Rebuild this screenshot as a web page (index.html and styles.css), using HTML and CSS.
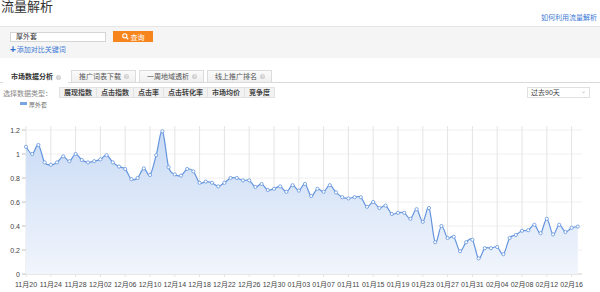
FILE: index.html
```html
<!DOCTYPE html>
<html lang="zh-CN">

<head>
    <meta charset="UTF-8">
    <title>流量解析</title>
    <link rel="stylesheet" href="styles.css">
</head>

<body>
    <div class="header">
        <h1 class="title">流量解析</h1>
        <a class="help-link" href="#">如何利用流量解析</a>
    </div>

    <div class="search-bar">
        <div class="search-row">
            <div class="search-input">厚外套</div>
            <button class="search-btn">
                <svg width="7" height="7" viewBox="0 0 10 10">
                    <circle cx="4" cy="4" r="3" fill="none" stroke="#fff" stroke-width="1.6"/>
                    <line x1="6.2" y1="6.2" x2="9" y2="9" stroke="#fff" stroke-width="1.8"/>
                </svg>
                查询
            </button>
        </div>
        <a class="add-link" href="#"><span class="plus">+</span>添加对比关键词</a>
    </div>

    <div class="tabs">
        <div class="tab active">市场数据分析<span class="help-dot">?</span></div>
        <div class="tab">推广词表下载<span class="help-dot">?</span></div>
        <div class="tab">一周地域透析<span class="help-dot">?</span></div>
        <div class="tab">线上推广排名<span class="help-dot">?</span></div>
    </div>

    <div class="type-row">
        <span class="type-label">选择数据类型：</span>
        <div class="type-btns">
            <span class="type-btn">展现指数</span>
            <span class="type-btn">点击指数</span>
            <span class="type-btn">点击率</span>
            <span class="type-btn">点击转化率</span>
            <span class="type-btn">市场均价</span>
            <span class="type-btn">竞争度</span>
        </div>
        <div class="range-select">过去90天<span class="arrow">⌄</span></div>
    </div>

    <div class="legend"><span class="legend-mark"></span>厚外套</div>

    <svg class="chart" id="chart" width="600" height="184" viewBox="0 108 600 184"></svg>

    <script>
        // 近90天数据
        const data = [1.06, 1.0, 1.075, 0.93, 0.91, 0.93, 0.98, 0.94, 1.0, 0.95, 0.93, 0.94, 0.955, 0.99, 0.93, 0.895, 0.875, 0.79, 0.80, 0.88, 0.825, 0.99, 1.19,
            0.89, 0.83, 0.82, 0.875, 0.855, 0.76, 0.77, 0.76, 0.73, 0.76, 0.80, 0.80, 0.78, 0.78, 0.725, 0.75, 0.70, 0.71, 0.73, 0.685, 0.74, 0.695, 0.75,
            0.65, 0.71, 0.685, 0.74, 0.68, 0.64, 0.63, 0.64, 0.64, 0.56, 0.60, 0.55, 0.57, 0.50, 0.51, 0.51, 0.46, 0.54, 0.435, 0.55, 0.265,
            0.40, 0.30, 0.31, 0.19, 0.265, 0.285, 0.13, 0.215, 0.215, 0.225, 0.165, 0.30, 0.325, 0.36, 0.365, 0.41, 0.34, 0.46, 0.33, 0.41, 0.35, 0.385, 0.395];
        const labels = ['11月20', '11月24', '11月28', '12月02', '12月06', '12月10', '12月14', '12月18', '12月22', '12月26', '12月30', '01月03',
            '01月07', '01月11', '01月15', '01月19', '01月23', '01月27', '01月31', '02月04', '02月08', '02月12', '02月16'];

        const svg = document.getElementById('chart');
        const left = 26, right = 582, zeroY = 274, unit = 120, step = 6.2;
        const px = i => left + i * step;
        const py = v => zeroY - v * unit;
        let html = '<defs><linearGradient id="fill" gradientUnits="userSpaceOnUse" x1="0" y1="130" x2="0" y2="274">' +
            '<stop offset="0" stop-color="#c9dbf5"/><stop offset="1" stop-color="#f1f5fc"/></linearGradient></defs>';

        // 网格与坐标
        for (let k = 0; k <= 6; k++) {
            const v = k * 0.2;
            const y = py(v);
            html += `<line x1="${left}" y1="${y}" x2="${right}" y2="${y}" stroke="#f0f0f0"/>`;
            html += `<line x1="22" y1="${y}" x2="${left}" y2="${y}" stroke="#c0c0c0"/>`;
            const txt = k === 0 ? '0' : (k === 5 ? '1' : v.toFixed(1));
            html += `<text x="20" y="${y + 2.5}" text-anchor="end" class="axis">${txt}</text>`;
        }
        labels.forEach((label, n) => {
            const x = px(n * 4);
            html += `<line x1="${x}" y1="126" x2="${x}" y2="${zeroY + 3}" stroke="#e4e4e4"/>`;
            html += `<text x="${x}" y="287" text-anchor="middle" class="axis">${label}</text>`;
        });
        html += `<line x1="${left}" y1="${zeroY}" x2="${right}" y2="${zeroY}" stroke="#d8d8d8"/>`;

        // 平滑曲线
        const pts = data.map((v, i) => [px(i), py(v)]);
        let d = `M${pts[0][0]},${pts[0][1]}`;
        for (let i = 0; i < pts.length - 1; i++) {
            const p0 = pts[i - 1] || pts[i], p1 = pts[i], p2 = pts[i + 1], p3 = pts[i + 2] || p2;
            const c1 = [p1[0] + (p2[0] - p0[0]) / 6, p1[1] + (p2[1] - p0[1]) / 6];
            const c2 = [p2[0] - (p3[0] - p1[0]) / 6, p2[1] - (p3[1] - p1[1]) / 6];
            d += ` C${c1[0].toFixed(1)},${c1[1].toFixed(1)} ${c2[0].toFixed(1)},${c2[1].toFixed(1)} ${p2[0].toFixed(1)},${p2[1].toFixed(1)}`;
        }
        const last = pts[pts.length - 1];
        html += `<path d="${d} L${last[0]},${zeroY} L${left},${zeroY} Z" fill="url(#fill)"/>`;
        html += `<path d="${d}" fill="none" stroke="#6394dd" stroke-width="1.2"/>`;
        pts.forEach(p => {
            html += `<circle cx="${p[0].toFixed(1)}" cy="${p[1].toFixed(1)}" r="1.6" fill="#fff" stroke="#6394dd" stroke-width="0.8"/>`;
        });
        svg.innerHTML = html;
    </script>
</body>

</html>
```

FILE: styles.css
```css
* {
    margin: 0;
    padding: 0;
    box-sizing: border-box;
}

body {
    font-family: 'Liberation Sans', 'Noto Sans CJK SC', sans-serif;
    font-size: 7px;
    color: #333;
    background-color: #fff;
    width: 600px;
    height: 292px;
    overflow: hidden;
}

a {
    text-decoration: none;
}

.header {
    height: 27px;
    display: flex;
    justify-content: space-between;
    align-items: flex-start;
    border-bottom: 1px solid #e6e6e6;
}

.title {
    font-size: 13px;
    font-weight: normal;
    line-height: 14px;
    color: #333;
    padding-left: 1px;
}

.help-link {
    color: #3b78d4;
    margin-top: 14px;
    margin-right: 3px;
    line-height: 8px;
}

.search-bar {
    background-color: #f5f5f5;
    height: 31px;
    padding: 4px 10px 0;
}

.search-row {
    display: flex;
    align-items: center;
}

.search-input {
    width: 96px;
    height: 10px;
    background-color: #fff;
    border: 1px solid #d5d5d5;
    line-height: 8px;
    padding-left: 5px;
    color: #333;
}

.search-btn {
    width: 40px;
    height: 11px;
    margin-left: 7px;
    border: none;
    background-color: #f7851d;
    color: #fff;
    font-family: inherit;
    font-size: 7px;
    display: flex;
    align-items: center;
    justify-content: center;
    gap: 2px;
}

.add-link {
    display: flex;
    align-items: center;
    margin-top: 4px;
    color: #3b78d4;
    line-height: 8px;
}

.plus {
    font-size: 10px;
    font-weight: bold;
    margin-right: 1px;
    color: #2d6ccc;
}

.tabs {
    display: flex;
    align-items: flex-end;
    margin-top: 10px;
    padding-left: 3px;
    border-bottom: 1px solid #d9d9d9;
    height: 15px;
}

.tab {
    height: 12px;
    display: flex;
    align-items: center;
    padding: 0 6px 0 7px;
    margin-right: 3px;
    border: 1px solid #dcdcdc;
    border-bottom: none;
    background: linear-gradient(#fafafa, #f0f0f0);
    color: #555;
    line-height: 8px;
}

.tab.active {
    background: #fff;
    border-color: #fff;
    font-weight: bold;
    color: #333;
    height: 13px;
    margin-bottom: -1px;
}

.help-dot {
    width: 5px;
    height: 5px;
    margin-left: 3px;
    border-radius: 50%;
    background-color: #d0d0d0;
    color: #fff;
    font-size: 4px;
    line-height: 5px;
    text-align: center;
    font-weight: normal;
}

.type-row {
    display: flex;
    align-items: center;
    margin-top: 4px;
    padding-left: 3px;
    height: 11px;
}

.type-label {
    color: #888;
    width: 56px;
}

.type-btns {
    display: flex;
}

.type-btn {
    height: 11px;
    line-height: 9px;
    padding: 0 4px;
    border: 1px solid #e2e2e2;
    margin-right: -1px;
    background-color: #f2f2f2;
    font-weight: bold;
    color: #444;
}

.range-select {
    margin-left: auto;
    margin-right: 10px;
    width: 63px;
    height: 11px;
    border: 1px solid #e0e0e0;
    display: flex;
    justify-content: space-between;
    align-items: center;
    padding: 0 3px;
    color: #444;
    line-height: 8px;
}

.arrow {
    color: #aaa;
    font-size: 6px;
    margin-top: -3px;
}

.legend {
    display: flex;
    align-items: center;
    height: 7px;
    margin-top: 3px;
    padding-left: 20px;
    color: #666;
    font-size: 6px;
}

.legend-mark {
    width: 7px;
    height: 3px;
    background-color: #7aa5e3;
    margin-right: 2px;
    margin-top: -3px;
}

.chart {
    display: block;
}

.axis {
    font-family: 'Liberation Sans', 'Noto Sans CJK SC', sans-serif;
    font-size: 7px;
    fill: #444;
}
```
